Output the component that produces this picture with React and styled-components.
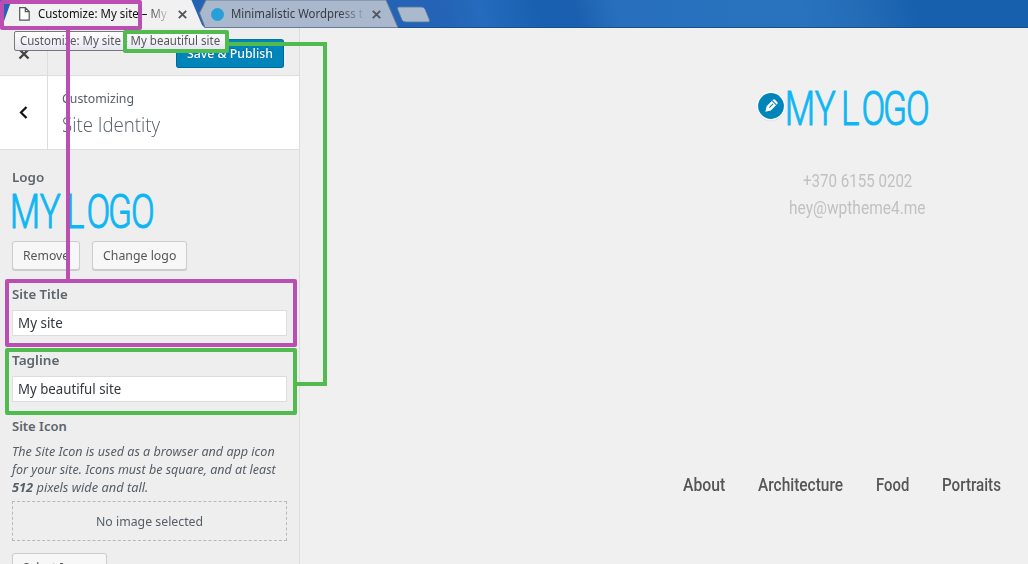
import React, { useLayoutEffect, useRef } from "react";
import styled, { createGlobalStyle, css } from "styled-components";

const purple = "#ba4eb2";
const green = "#52bb50";

const GlobalStyle = createGlobalStyle`
  * { box-sizing: border-box; }
  body { margin: 0; overflow: hidden; background: #f0f0f0; font-family: "Noto Sans", "Open Sans", sans-serif; font-size: 13px; color: #555d66; }
  h1, h2, h3, p { margin: 0; font-size: inherit; font-weight: inherit; }
`;

const FitBox = styled.span`
  display: block;
  flex: none;
  width: ${(p) => p.$width}px;
  white-space: nowrap;
`;
const FitInner = styled.span`
  display: inline-block;
  transform-origin: 0 50%;
`;

/* Condenses or expands a single line so that it fills the given width. */
function Fit({ width, children }) {
  const ref = useRef(null);
  useLayoutEffect(() => {
    const el = ref.current;
    el.style.transform = `scaleX(${width / el.offsetWidth})`;
  }, [width]);
  return (
    <FitBox $width={width}>
      <FitInner ref={ref}>{children}</FitInner>
    </FitBox>
  );
}

const Page = styled.div`
  position: relative;
  width: 1028px;
  height: 564px;
  overflow: hidden;
  display: flex;
  flex-direction: column;
`;

/* Browser tab strip */
const TabStrip = styled.header`
  position: relative;
  height: 28px;
  flex: none;
  display: flex;
  background: linear-gradient(75deg, #2562b3 0%, #2463b5 43%, #256bbd 47%, #1a60b0 52.5%, #1b60b0 56%, #2870bd 60%, #2872be 78%, #246bb5 84%, #1660ae 89%, #1660ad 100%);
`;
const TabShapes = styled.svg`
  position: absolute;
  inset: 0;
`;
const Tab = styled.div`
  position: relative;
  display: flex;
  align-items: center;
  height: 28px;
  width: ${(p) => p.$width}px;
  padding-left: ${(p) => p.$inset}px;
  gap: ${(p) => p.$gap}px;
  font-size: 12px;
  color: ${(p) => p.$color};
`;
const TabTitle = styled.div`
  width: ${(p) => p.$width}px;
  flex: none;
  overflow: hidden;
  line-height: 18px;
  mask-image: linear-gradient(to right, #000 ${(p) => p.$width - 24}px, transparent ${(p) => p.$width + 4}px);
`;
const TabDot = styled.i`
  width: 13px;
  height: 13px;
  border-radius: 50%;
  background: #27a0da;
`;
const TabClose = styled.svg`
  width: 9px;
  height: 9px;
  margin-left: 2px;
  stroke: #50555c;
  stroke-width: 1.8;
`;

const Body = styled.div`
  flex: 1;
  display: flex;
  min-height: 0;
`;

/* Customizer sidebar */
const Sidebar = styled.aside`
  width: 300px;
  flex: none;
  background: #eee;
  border-right: 1px solid #ddd;
  overflow: hidden;
`;
const ActionBar = styled.div`
  height: 48px;
  display: flex;
  justify-content: space-between;
  border-bottom: 1px solid #ddd;
`;
const IconCell = styled.div`
  width: 48px;
  flex: none;
  display: flex;
  align-items: center;
  justify-content: center;
  border-right: 1px solid #ddd;
`;
const CloseIcon = styled.svg`
  width: 12px;
  height: 12px;
  margin-top: 5px;
  stroke: #444;
  stroke-width: 2.4;
`;
const PublishButton = styled.div`
  width: 108px;
  height: 29px;
  margin: 11px 15px 0 0;
  padding-left: 10px;
  border: 1px solid #006799;
  border-top-color: #0073aa;
  border-radius: 3px;
  background: #0085ba;
  color: #fff;
  font-weight: 500;
  line-height: 26px;
  text-shadow: 0 -1px 1px #006799;
`;
const SectionHeader = styled.div`
  height: 74px;
  display: flex;
  background: #fff;
  border-bottom: 1px solid #ddd;
`;
const SectionTitle = styled.div`
  padding: 12px 0 0 14px;
`;
const Eyebrow = styled.p`
  line-height: 20px;
`;
const Heading = styled.h1`
  margin-top: 2px;
  font: 300 20px/30px "Open Sans", sans-serif;
`;
const Controls = styled.div`
  padding: 17px 12px 0;
`;
const Label = styled.h3`
  height: 20px;
  line-height: 20px;
  font-weight: 600;
  color: #5c646c;
  margin-bottom: 6px;
`;
const ButtonRow = styled.div`
  display: flex;
  gap: 12px;
  margin: 12px 0 14px;
`;
const Button = styled.div`
  width: ${(p) => p.$width}px;
  height: 29px;
  padding-left: 10px;
  line-height: 26px;
  border: 1px solid #ccc;
  border-radius: 3px;
  box-shadow: 0 1px 0 #ccc;
  background: #f7f7f7;
  color: #555;
`;
const Input = styled.div`
  height: 26px;
  margin-bottom: 14px;
  padding-left: 5px;
  font-size: 14px;
  line-height: 24px;
  color: #32373c;
  background: #fff;
  border: 1px solid #ddd;
`;
const Description = styled.div`
  font-style: italic;
  line-height: 18px;
  margin-bottom: 5px;
`;
const Placeholder = styled.div`
  display: flex;
  justify-content: center;
  height: 40px;
  line-height: 38px;
  margin-bottom: 12px;
  border: 1px dashed #b4b9be;
`;

/* Site preview */
const Preview = styled.main`
  position: relative;
  flex: 1;
  display: flex;
  flex-direction: column;
  align-items: flex-end;
`;
const LogoMark = styled.svg`
  display: block;
  width: 141px;
  height: 36px;
  overflow: visible;
  fill: #0fb6f5;
  stroke: #0fb6f5;
  stroke-linejoin: round;
  stroke-width: 1;
  font: 300 48px Roboto, sans-serif;
`;
const Brand = styled.div`
  display: flex;
  align-items: center;
  gap: 1px;
  margin: 62px 100px 0 0;

  > svg:first-child {
    position: relative;
    top: -2px;
  }
`;
const Contact = styled.div`
  display: flex;
  flex-direction: column;
  align-items: center;
  width: 138px;
  margin: 41px 102px 0 0;
  font: 400 18px/27px Roboto, sans-serif;
  color: #c1c1c1;
`;
const Menu = styled.nav`
  display: flex;
  gap: 33px;
  margin: 250px 27px 0 0;
  font: 500 18px/28px Roboto, sans-serif;
  color: #555;
`;

/* Annotation layer drawn over the page */
const Tooltip = styled.div`
  position: absolute;
  left: 14px;
  top: 31px;
  width: 213px;
  height: 20px;
  padding-left: 5px;
  border: 1px solid #777;
  border-radius: 2px;
  background: linear-gradient(#fff, #e6e6f2);
  color: #575757;
  font-size: 12px;
  line-height: 18px;
`;
const area = css`
  position: absolute;
  left: ${(p) => p.$x}px;
  top: ${(p) => p.$y}px;
  width: ${(p) => p.$w}px;
  height: ${(p) => p.$h}px;
`;
const Outline = styled.div`
  ${area}
  border: 4px solid ${(p) => p.$color};
  border-radius: 2px;
`;
const Line = styled.div`
  ${area}
  background: ${(p) => p.$color};
`;

function Logo() {
  return (
    <LogoMark viewBox="0 0 141 36">
      <text x="-3.2 38 65 74 102 131.5 163" y="34.5" transform="scale(.73 1)">MY LOGO</text>
    </LogoMark>
  );
}

function Cross() {
  return (
    <TabClose viewBox="0 0 9 9">
      <path d="M.8.8 8.2 8.2M8.2.8.8 8.2" />
    </TabClose>
  );
}

function EditBadge() {
  return (
    <svg width="30" height="32" viewBox="0 0 30 32">
      <circle cx="15" cy="17.5" r="14" fill="#d9dddf" opacity=".6" />
      <circle cx="15" cy="16" r="14.2" fill="#fff" />
      <circle cx="15" cy="16" r="12.9" fill="#0085ba" />
      <g transform="rotate(45 15 16)">
        <path d="M12 10.2a1.5 1.5 0 0 1 1.5-1.5h3a1.5 1.5 0 0 1 1.5 1.5V19.2L15 24 12 19.2Z" fill="#fff" />
        <path d="M12 11.4h6M15 13v5.4" stroke="#0085ba" strokeWidth="1" />
      </g>
    </svg>
  );
}

export default function App() {
  return (
    <>
      <GlobalStyle />
      <Page>
        <TabStrip>
          <TabShapes width="1028" height="28">
            <path d="M0 27.5H1028" stroke="#174f8d" />
            <path d="M206 0 199.5 13 205 27.5H398L386 0Z" fill="#a9b8cd" stroke="#687b94" />
            <path d="M0 28 3 24 12-1H191L202 25 205 28Z" fill="#f1f1f1" />
            <path d="M399 7H421Q424 7 425 9L429.5 20Q430 22 428 22H406Q403 22 402 20L397.5 9Q397 7 399 7Z" fill="#aab9cc" stroke="#5478a5" strokeWidth=".8" />
          </TabShapes>
          <Tab $width={200} $inset={19} $gap={8} $color="#111">
            <svg width="11" height="14" viewBox="0 0 11 14" fill="#fff" stroke="#555" strokeWidth="1.2">
              <path d="M.7.7H6.3L10.2 4.6V13.2H.7ZM6.3.7V4.6H10.2" />
            </svg>
            <TabTitle $width={130}><Fit width={129}>Customize: My site – My</Fit></TabTitle>
            <Cross />
          </Tab>
          <Tab $width={200} $inset={11} $gap={7} $color="#373b42">
            <TabDot />
            <TabTitle $width={132}><Fit width={132}>Minimalistic Wordpress t</Fit></TabTitle>
            <Cross />
          </Tab>
        </TabStrip>
        <Body>
          <Sidebar>
            <ActionBar>
              <IconCell>
                <CloseIcon viewBox="0 0 12 12"><path d="M1.5 1.5 10.5 10.5M10.5 1.5 1.5 10.5" /></CloseIcon>
              </IconCell>
              <PublishButton><Fit width={86}>Save &amp; Publish</Fit></PublishButton>
            </ActionBar>
            <SectionHeader>
              <IconCell>
                <svg width="9" height="14" viewBox="0 0 9 14" fill="none" stroke="#111" strokeWidth="2.2">
                  <path d="M7.5 1 2 6.5 7.5 12" />
                </svg>
              </IconCell>
              <SectionTitle>
                <Eyebrow><Fit width={72}>Customizing</Fit></Eyebrow>
                <Heading><Fit width={98}>Site Identity</Fit></Heading>
              </SectionTitle>
            </SectionHeader>
            <Controls>
              <Label><Fit width={32}>Logo</Fit></Label>
              <Logo />
              <ButtonRow>
                <Button $width={68}><Fit width={46}>Remove</Fit></Button>
                <Button $width={95}><Fit width={73}>Change logo</Fit></Button>
              </ButtonRow>
              <Label><Fit width={56}>Site Title</Fit></Label>
              <Input><Fit width={45}>My site</Fit></Input>
              <Label><Fit width={47}>Tagline</Fit></Label>
              <Input><Fit width={103}>My beautiful site</Fit></Input>
              <Label><Fit width={55}>Site Icon</Fit></Label>
              <Description>
                <Fit width={263}>The Site Icon is used as a browser and app icon</Fit>
                <Fit width={264}>for your site. Icons must be square, and at least</Fit>
                <Fit width={136}><strong>512</strong> pixels wide and tall.</Fit>
              </Description>
              <Placeholder><Fit width={107}>No image selected</Fit></Placeholder>
              <Button $width={95}><Fit width={73}>Select Image</Fit></Button>
            </Controls>
          </Sidebar>
          <Preview>
            <Brand><EditBadge /><Logo /></Brand>
            <Contact>
              <Fit width={109}>+370 6155 0202</Fit>
              <Fit width={137}>hey@wptheme4.me</Fit>
            </Contact>
            <Menu>
              <Fit width={42}>About</Fit>
              <Fit width={85}>Architecture</Fit>
              <Fit width={33}>Food</Fit>
              <Fit width={59}>Portraits</Fit>
            </Menu>
          </Preview>
        </Body>
        <Tooltip><Fit width={200}>Customize: My site - My beautiful site</Fit></Tooltip>
        <Outline $color={purple} $x={0} $y={0} $w={142} $h={30} />
        <Line $color={purple} $x={66} $y={30} $w={4} $h={250} />
        <Outline $color={purple} $x={5} $y={279} $w={292} $h={68} />
        <Outline $color={green} $x={123} $y={30} $w={106} $h={23} />
        <Line $color={green} $x={229} $y={42} $w={98} $h={4} />
        <Line $color={green} $x={323} $y={42} $w={4} $h={344} />
        <Line $color={green} $x={297} $y={382} $w={30} $h={4} />
        <Outline $color={green} $x={5} $y={348} $w={292} $h={67} />
      </Page>
    </>
  );
}
